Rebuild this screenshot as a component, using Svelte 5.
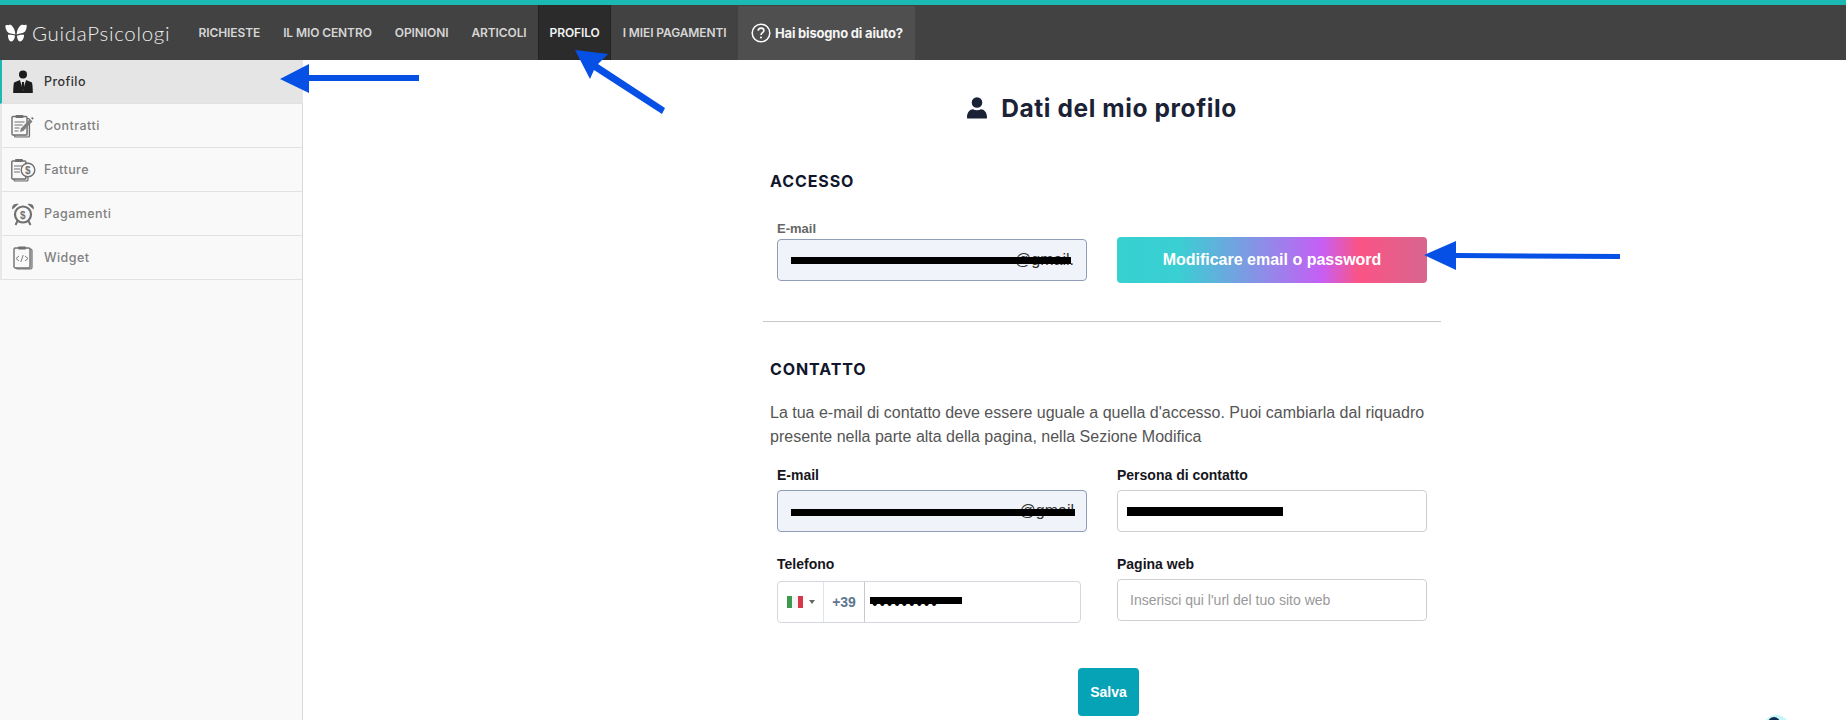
<script>
  const navItems = ['RICHIESTE', 'IL MIO CENTRO', 'OPINIONI', 'ARTICOLI', 'PROFILO', 'I MIEI PAGAMENTI'];
  const sideItems = [
    { label: 'Profilo', icon: 'user', active: true },
    { label: 'Contratti', icon: 'contract' },
    { label: 'Fatture', icon: 'invoice' },
    { label: 'Pagamenti', icon: 'clock' },
    { label: 'Widget', icon: 'widget' }
  ];
</script>

<div class="page">
  <header class="top">
    <div class="logo">
      <svg class="butterfly" width="22" height="18" viewBox="0 0 22 18" aria-hidden="true">
        <path fill="#fff" d="M.5 1.500C1.500.3 3 1.500 4 1c1.500-.5 2.500 0 3.500 1.500C9 4.500 10.300 7 10.300 10.500 8 9.800 3.500 10 1.800 7 .8 5 .2 3 .5 1.500zM21.500.8c.5 2 0 4.700-1.300 6.500-1.500 2-5.700 2.300-8.500 3.200 0-3.500 1.300-6 2.800-8C15.800 1 17 .3 18.500 1c1 .3 2-.6 3-.2zM3 10.800c2-.3 5.500 0 7 1-.2 2.700-1.500 5.700-3.800 5.700C3.800 17.500 2.800 13.300 3 10.800zM12 11.800c1.800-.9 4.800-1.300 7-1 .3 2.800-1.500 6.700-4 6.700-1.800 0-3-3.200-3-5.700z"/>
      </svg>
      <span class="wordmark">GuidaPsicologi</span>
    </div>
    <nav class="nav">
      {#each navItems as item}
        <a class="nav-item" class:current={item === 'PROFILO'} href="#top">{item}</a>
      {/each}
      <a class="help" href="#top">
        <svg width="20" height="20" viewBox="0 0 20 20" aria-hidden="true">
          <circle cx="10" cy="10" r="8.800" fill="none" stroke="#fff" stroke-width="1.500"/>
          <path d="M7.200 7.800c0-1.700 1.300-2.700 2.900-2.700s2.800 1 2.800 2.400c0 2.200-2.900 2.200-2.900 4.500" fill="none" stroke="#fff" stroke-width="1.600"/>
          <circle cx="10" cy="14.600" r="1" fill="#fff"/>
        </svg>
        <span>Hai bisogno di aiuto?</span>
      </a>
    </nav>
  </header>

  <div class="body">
    <aside class="side">
      {#each sideItems as s}
        <a class="side-item" class:active={s.active} href="#top">
          <span class="side-icon">
            {#if s.icon === 'user'}
              <svg width="20" height="24" viewBox="0 0 20 24" aria-hidden="true">
                <circle cx="10" cy="4.500" r="4" fill="#1c1c1c"/>
                <path fill="#1c1c1c" d="M1 12.500 7 10l3 3 3-3 6 2.500c.6 3 .8 6.500.8 10.500H.2c0-4 .2-7.500.8-10.500z"/>
                <path fill="#e8e8e8" d="M7 10h6l-3 11z"/>
                <path fill="#1c1c1c" d="M9 12h2l.6 6-1.600 3-1.600-3z"/>
              </svg>
            {:else if s.icon === 'contract'}
              <svg width="24" height="24" viewBox="0 0 24 24" aria-hidden="true">
                <rect x="3.500" y="4.500" width="15" height="18.500" rx="1" fill="#d8d8d8" stroke="#707070" stroke-width="1.200"/>
                <rect x="1" y="2.500" width="15" height="18.500" rx="1" fill="#f9f9f9" stroke="#707070" stroke-width="1.400"/>
                <rect x="4.500" y="1" width="8" height="3" rx="1" fill="#707070"/>
                <path d="M3.500 8h10M3.500 11h8M3.500 14h5M3.500 17h4" stroke="#707070" stroke-width="1.200"/>
                <path d="M9 18l.8-3.500L19 5l2.500 2.500L12.300 17z" fill="#808080"/>
                <path d="M20 4l1.200-1 1.500 1.500-1 1.200z" fill="#707070"/>
              </svg>
            {:else if s.icon === 'invoice'}
              <svg width="25" height="24" viewBox="0 0 25 24" aria-hidden="true">
                <rect x="3" y="5" width="14" height="18" rx="1" fill="#d8d8d8" stroke="#707070" stroke-width="1.200"/>
                <rect x=".8" y="3" width="14" height="18" rx="1" fill="#f9f9f9" stroke="#707070" stroke-width="1.400"/>
                <rect x="4" y="1" width="8" height="3" rx="1" fill="#707070"/>
                <path d="M3 8h8M3 11h6M3 14h6" stroke="#707070" stroke-width="1.200"/>
                <circle cx="17" cy="12" r="6.800" fill="#f9f9f9" stroke="#707070" stroke-width="1.400"/>
                <text x="17" y="15.500" text-anchor="middle" class="dollar">$</text>
              </svg>
            {:else if s.icon === 'clock'}
              <svg width="24" height="24" viewBox="0 0 24 24" aria-hidden="true">
                <path d="M1.500 7.500C0 4 3.500 .5 7.500 2zM22.500 7.500C24 4 20.500 .5 16.500 2z" fill="#707070"/>
                <path d="M6.500 19 4.500 23M17.500 19l2 4" stroke="#707070" stroke-width="2"/>
                <circle cx="12" cy="12.500" r="8" fill="#f9f9f9" stroke="#707070" stroke-width="2.200"/>
                <text x="12" y="16.500" text-anchor="middle" class="dollar">$</text>
              </svg>
            {:else}
              <svg width="20" height="24" viewBox="0 0 20 24" aria-hidden="true">
                <rect x="3" y="3" width="16" height="20" rx="1.500" fill="#d8d8d8" stroke="#707070" stroke-width="1.200"/>
                <rect x="1" y="2" width="16" height="20" rx="1.500" fill="#f9f9f9" stroke="#707070" stroke-width="1.400"/>
                <rect x="5" y="0.500" width="8" height="3" rx="1" fill="#707070"/>
                <path d="M6 10l-3 2.500L6 15M12 10l3 2.500L12 15M10.200 9l-2.400 7" fill="none" stroke="#707070" stroke-width=".9"/>
              </svg>
            {/if}
          </span>
          <span>{s.label}</span>
        </a>
      {/each}
    </aside>

    <main class="main">
      <div class="column">
        <h1 class="title">
          <svg width="20" height="22" viewBox="0 0 20 22" aria-hidden="true">
            <circle cx="10" cy="5.500" r="5.300" fill="#1b2236"/>
            <path d="M1 21.500c-.8 0-1-.6-1-1.300C0 15.500 3 12.300 6 12.300c1.200.6 2.500 1 4 1s2.800-.4 4-1c3 0 6 3.200 6 7.900 0 .7-.2 1.300-1 1.300z" fill="#1b2236"/>
          </svg>
          <span>Dati del mio profilo</span>
        </h1>

        <h2 class="section first">ACCESSO</h2>
        <div class="row access">
          <div class="field">
            <span class="label muted">E-mail</span>
            <div class="input filled">
              <span class="redacted-text">@gmail.</span>
              <span class="bar bar-a"></span>
            </div>
          </div>
          <button class="gradient" type="button">Modificare email o password</button>
        </div>

        <hr class="rule" />

        <h2 class="section">CONTATTO</h2>
        <p class="note">La tua e-mail di contatto deve essere uguale a quella d'accesso. Puoi cambiarla dal riquadro presente nella parte alta della pagina, nella Sezione Modifica</p>

        <div class="row contact">
          <div class="field">
            <span class="label">E-mail</span>
            <div class="input filled">
              <span class="redacted-text">@gmail</span>
              <span class="bar bar-b"></span>
            </div>
          </div>
          <div class="field">
            <span class="label">Persona di contatto</span>
            <div class="input"><span class="bar bar-c"></span></div>
          </div>
        </div>

        <div class="row lower">
          <div class="field">
            <span class="label phone-label">Telefono</span>
            <div class="phone">
              <div class="flag-cell">
                <span class="flag"><i class="g"></i><i class="w"></i><i class="r"></i></span>
                <span class="caret"></span>
              </div>
              <div class="code">+39</div>
              <div class="number"><span class="dots">•••••••••</span><span class="bar bar-d"></span></div>
            </div>
          </div>
          <div class="field">
            <span class="label">Pagina web</span>
            <div class="input placeholder">Inserisci qui l'url del tuo sito web</div>
          </div>
        </div>

        <button class="save" type="button">Salva</button>
      </div>
    </main>
  </div>

  <span class="chat"><span class="chat-dot"></span></span>

  <svg class="arrows" width="1846" height="720" viewBox="0 0 1846 720" aria-hidden="true">
    <path fill="#0650e6" d="M280 79 309 64V75L419 75V81L309 81V93Z"/>
    <path fill="#0650e6" d="M575 50 608 54 598 64 665 108 662 114 594 70 590 79Z"/>
    <path fill="#0650e6" d="M1424 255 1456 241V253L1620 254V259L1456 258V270Z"/>
  </svg>
</div>

<style>
  :global(body) { margin: 0; background: #fff; }
  .page {
    position: relative;
    width: 1846px;
    height: 720px;
    overflow: hidden;
    font-family: "Liberation Sans", Arial, sans-serif;
    color: #555;
  }
  a { text-decoration: none; }

  .top {
    display: flex;
    height: 55px;
    background: #424242;
    border-top: 5px solid #1bb8b4;
  }
  .logo {
    display: flex;
    align-items: center;
    gap: 5px;
    width: 187px;
    padding-left: 5px;
    box-sizing: border-box;
  }
  .wordmark {
    font-family: Lato, sans-serif;
    font-weight: 300;
    font-size: 20.5px;
    letter-spacing: .7px;
    color: #eee;
  }
  .nav { display: flex; height: 55px; }
  .nav-item {
    display: flex;
    align-items: center;
    padding: 0 11.5px;
    font-family: Inter, sans-serif;
    font-weight: 600;
    font-size: 12px;
    letter-spacing: -.1px;
    color: #d6d6d6;
    white-space: nowrap;
  }
  .nav-item.current {
    background: #2b2b2b;
    color: #f2f2f2;
    border-left: 1px solid #222;
    border-right: 1px solid #222;
    padding: 0 10.5px;
  }
  .help {
    display: flex;
    align-items: center;
    gap: 4px;
    width: 177px;
    box-sizing: border-box;
    padding-left: 13px;
    margin-top: 1px;
    background: #4f4f4f;
    font-family: Inter, sans-serif;
    font-weight: 700;
    font-size: 13px;
    letter-spacing: -.2px;
    color: #f4f4f4;
    white-space: nowrap;
  }

  .body { display: flex; height: 660px; }
  .side {
    flex: none;
    width: 303px;
    box-sizing: border-box;
    background: #f9f9f9;
    border-right: 1px solid #d9d9d9;
  }
  .side-item {
    display: flex;
    align-items: center;
    height: 44px;
    box-sizing: border-box;
    border-bottom: 1px solid #e2e2e2;
    border-left: 2px solid #e8e8e8;
    font-family: Inter, sans-serif;
    font-weight: 500;
    font-size: 12.5px;
    letter-spacing: .45px;
    color: #808080;
  }
  .side-item.active {
    background: #e5e5e5;
    border-left-color: #1bb8b4;
    margin-right: -1px;
    color: #333;
  }
  .side-icon {
    display: flex;
    justify-content: center;
    align-items: center;
    width: 42px;
    flex: none;
  }
  .dollar { font: 700 10px "Liberation Sans", sans-serif; fill: #707070; }

  .main { flex: 1; padding-left: 460px; }
  .column { width: 678px; }
  .title {
    display: flex;
    align-items: center;
    justify-content: center;
    gap: 14px;
    height: 26px;
    margin: 35px 0 0;
    font-family: Inter, sans-serif;
    font-weight: 700;
    font-size: 24.5px;
    letter-spacing: .6px;
    color: #1b2236;
  }
  .section {
    margin: 37px 0 0 7px;
    font-family: Inter, sans-serif;
    font-weight: 700;
    font-size: 16px;
    line-height: 20px;
    letter-spacing: .9px;
    color: #10162b;
  }
  .section.first { margin-top: 50px; }

  .row {
    display: flex;
    gap: 30px;
    margin-left: 14px;
  }
  .access { margin-top: 30px; }
  .contact { margin-top: 18px; }
  .lower { margin-top: 24px; }

  .field { display: flex; flex-direction: column; width: 310px; }
  .label {
    font-size: 14px;
    font-weight: 700;
    line-height: 16px;
    margin-bottom: 7px;
    color: #16161c;
  }
  .label.muted { font-size: 13px; color: #666; margin-bottom: 2px; }
  .label.phone-label { margin-bottom: 9px; }

  .input {
    position: relative;
    display: flex;
    align-items: center;
    box-sizing: border-box;
    height: 42px;
    padding: 0 12px;
    overflow: hidden;
    background: #fff;
    border: 1px solid #cfcfcf;
    border-radius: 4px;
    font-size: 14px;
    color: #222;
  }
  .input.filled {
    justify-content: flex-end;
    background: #f0f3f9;
    border-color: #8f9db8;
  }
  .input.placeholder { color: #999; }
  .redacted-text { font-size: 16px; color: #333; }

  .bar { position: absolute; background: #000; }
  .bar-a { left: 13px; top: 17px; width: 280px; height: 7px; }
  .bar-b { left: 13px; top: 18px; width: 284px; height: 7px; }
  .bar-c { left: 9px; top: 16px; width: 156px; height: 9px; }
  .bar-d { left: 5px; top: 15px; width: 92px; height: 7px; }

  .gradient {
    align-self: flex-start;
    width: 310px;
    height: 46px;
    margin-top: 16px;
    padding: 0;
    border: none;
    border-radius: 4px;
    background: linear-gradient(90deg, #36d1d1 0%, #3acfd3 20%, #c65ff5 66%, #fb5485 78%, #d8668f 100%);
    font: 700 16px "Liberation Sans", Arial, sans-serif;
    color: #fff;
  }

  .rule {
    height: 1px;
    margin: 38px 0 0;
    border: none;
    background: #c8c8c8;
  }

  .note {
    margin: 22px 0 0 7px;
    font-size: 16px;
    line-height: 24px;
    color: #555;
  }

  .phone {
    display: flex;
    box-sizing: border-box;
    width: 304px;
    height: 42px;
    background: #fff;
    border: 1px solid #d4d8de;
    border-radius: 4px;
  }
  .flag-cell {
    display: flex;
    align-items: center;
    gap: 6px;
    box-sizing: border-box;
    width: 46px;
    padding-left: 9px;
    border-right: 1px solid #dfe5ef;
  }
  .flag { display: flex; width: 16px; height: 12px; }
  .flag i { flex: 1; }
  .flag .g { background: #3d9a4f; }
  .flag .w { background: #f5f5f5; }
  .flag .r { background: #d8374a; }
  .caret {
    width: 0;
    height: 0;
    border-left: 3px solid transparent;
    border-right: 3px solid transparent;
    border-top: 4px solid #666;
  }
  .code {
    display: flex;
    align-items: center;
    justify-content: center;
    box-sizing: border-box;
    width: 41px;
    border-right: 1px solid #c9c9c9;
    font-size: 14px;
    font-weight: 700;
    color: #5f7690;
  }
  .number {
    position: relative;
    flex: 1;
  }
  .dots {
    position: absolute;
    left: 7px;
    top: 14px;
    font-size: 16px;
    line-height: 16px;
    letter-spacing: 1.8px;
    color: #000;
  }

  .save {
    display: block;
    width: 61px;
    height: 48px;
    margin: 45px 0 0 315px;
    padding: 0;
    border: none;
    border-radius: 4px;
    background: #06a3b6;
    font: 700 14px "Liberation Sans", Arial, sans-serif;
    color: #fff;
  }

  .chat {
    position: absolute;
    left: 1763px;
    top: 715px;
    width: 27px;
    height: 27px;
    border-radius: 50%;
    background: #c8f6f8;
  }
  .chat-dot {
    position: absolute;
    left: 5px;
    top: 2px;
    width: 12px;
    height: 12px;
    border-radius: 50%;
    background: #0d2c52;
  }
  .arrows {
    position: absolute;
    inset: 0;
    pointer-events: none;
  }
</style>
